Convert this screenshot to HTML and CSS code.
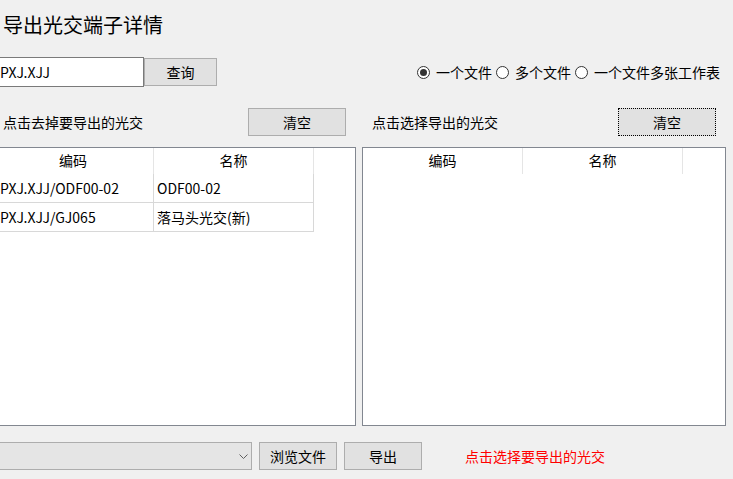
FILE: index.html
```html
<!DOCTYPE html>
<html lang="zh-CN">
<head>
<meta charset="utf-8">
<title>导出光交端子详情</title>
<link rel="stylesheet" href="styles.css">
</head>
<body>
<div class="window">
  <h1 class="title">导出光交端子详情</h1>

  <div class="toolbar">
    <div class="search">
      <div class="text-input">PXJ.XJJ</div>
      <button class="btn btn-query">查询</button>
    </div>
    <div class="radios">
      <label class="radio checked"><span class="circle"></span><span>一个文件</span></label>
      <label class="radio"><span class="circle"></span><span>多个文件</span></label>
      <label class="radio"><span class="circle"></span><span>一个文件多张工作表</span></label>
    </div>
  </div>

  <div class="panels">
    <section class="panel panel-left">
      <div class="panel-head">
        <span class="label">点击去掉要导出的光交</span>
        <button class="btn btn-clear">清空</button>
      </div>
      <div class="listbox">
        <div class="grid">
          <div class="hcell">编码</div>
          <div class="hcell">名称</div>
          <div class="cell">PXJ.XJJ/ODF00-02</div>
          <div class="cell">ODF00-02</div>
          <div class="cell">PXJ.XJJ/GJ065</div>
          <div class="cell">落马头光交(新)</div>
        </div>
      </div>
    </section>

    <section class="panel panel-right">
      <div class="panel-head">
        <span class="label">点击选择导出的光交</span>
        <button class="btn btn-clear focused">清空</button>
      </div>
      <div class="listbox">
        <div class="grid">
          <div class="hcell">编码</div>
          <div class="hcell">名称</div>
        </div>
      </div>
    </section>
  </div>

  <div class="footer">
    <div class="combo">
      <svg class="chev" width="9" height="5" viewBox="0 0 9 5"><polyline points="0.5,0.5 4.5,4.5 8.5,0.5" fill="none" stroke="#606060" stroke-width="1"/></svg>
    </div>
    <button class="btn btn-foot">浏览文件</button>
    <button class="btn btn-foot">导出</button>
    <span class="hint">点击选择要导出的光交</span>
  </div>
</div>
</body>
</html>
```

FILE: styles.css
```css
html, body {
  margin: 0;
  padding: 0;
  background: #f0f0f0;
  overflow: hidden;
}

body {
  width: 733px;
  height: 479px;
  font-family: "Noto Sans CJK SC", "Noto Sans", sans-serif;
  font-size: 14px;
  color: #000;
}

.window {
  width: 741px;
  margin-left: -8px;
  padding-right: 7px;
  box-sizing: border-box;
}

.title {
  margin: 0;
  padding: 13px 0 0 11px;
  font-size: 20px;
  font-weight: normal;
  line-height: 24px;
}

.toolbar {
  margin-top: 20px;
  height: 30px;
  display: flex;
  justify-content: space-between;
  align-items: center;
  padding-right: 6px;
}

.search {
  display: flex;
  align-items: flex-start;
  height: 30px;
}

.text-input {
  width: 152px;
  height: 30px;
  box-sizing: border-box;
  border: 1px solid #7a7a7a;
  background: #fff;
  padding-left: 7px;
  line-height: 28px;
}

.btn {
  font-family: inherit;
  font-size: 14px;
  color: #000;
  background: #e1e1e1;
  border: 1px solid #adadad;
  height: 28px;
  box-sizing: border-box;
  padding: 0;
  line-height: 26px;
}

.btn-query {
  width: 73px;
  margin-top: 1px;
}

.radios {
  display: flex;
  align-items: center;
  gap: 4px;
}

.radio {
  display: flex;
  align-items: center;
  gap: 6px;
  line-height: 20px;
}

.circle {
  width: 13px;
  height: 13px;
  box-sizing: border-box;
  border: 1px solid #333;
  border-radius: 50%;
  background: #fff;
  display: flex;
  align-items: center;
  justify-content: center;
}

.radio.checked .circle::after {
  content: "";
  width: 7px;
  height: 7px;
  border-radius: 50%;
  background: #333;
}

.panels {
  margin-top: 21px;
  display: grid;
  grid-template-columns: 364px 364px;
  column-gap: 6px;
}

.panel-head {
  height: 28px;
  display: flex;
  justify-content: space-between;
  align-items: center;
  padding: 0 10px;
}

.panel-left .panel-head {
  padding-left: 11px;
}

.label {
  line-height: 20px;
}

.btn-clear {
  width: 98px;
}

.btn-clear.focused {
  border: 1px dotted #000;
}

.listbox {
  margin-top: 11px;
  height: 279px;
  box-sizing: border-box;
  border: 1px solid #828790;
  background: #fff;
  overflow: hidden;
}

.grid {
  display: grid;
  grid-template-columns: 160px 160px;
  grid-auto-rows: 29px;
  grid-template-rows: 26px;
}

.panel-left .grid {
  grid-template-columns: 161px 160px;
}

.hcell {
  text-align: center;
  line-height: 24px;
  border-right: 1px solid #e5e5e5;
}

.cell {
  padding-left: 3px;
  line-height: 28px;
  border-right: 1px solid #d8d8d8;
  border-bottom: 1px solid #d8d8d8;
  white-space: nowrap;
  overflow: hidden;
}

.grid .cell:nth-child(odd) {
  padding-left: 7px;
}

.footer {
  margin-top: 16px;
  height: 28px;
  display: flex;
  align-items: center;
}

.combo {
  width: 260px;
  height: 28px;
  box-sizing: border-box;
  border: 1px solid #adadad;
  background: #e5e5e5;
  display: flex;
  align-items: center;
  justify-content: flex-end;
  padding-right: 3px;
}

.chev {
  display: block;
  margin-top: 1px;
}

.btn-foot {
  width: 78px;
  margin-left: 7px;
}

.hint {
  margin-left: 43px;
  color: #ff0000;
  line-height: 20px;
}
```
